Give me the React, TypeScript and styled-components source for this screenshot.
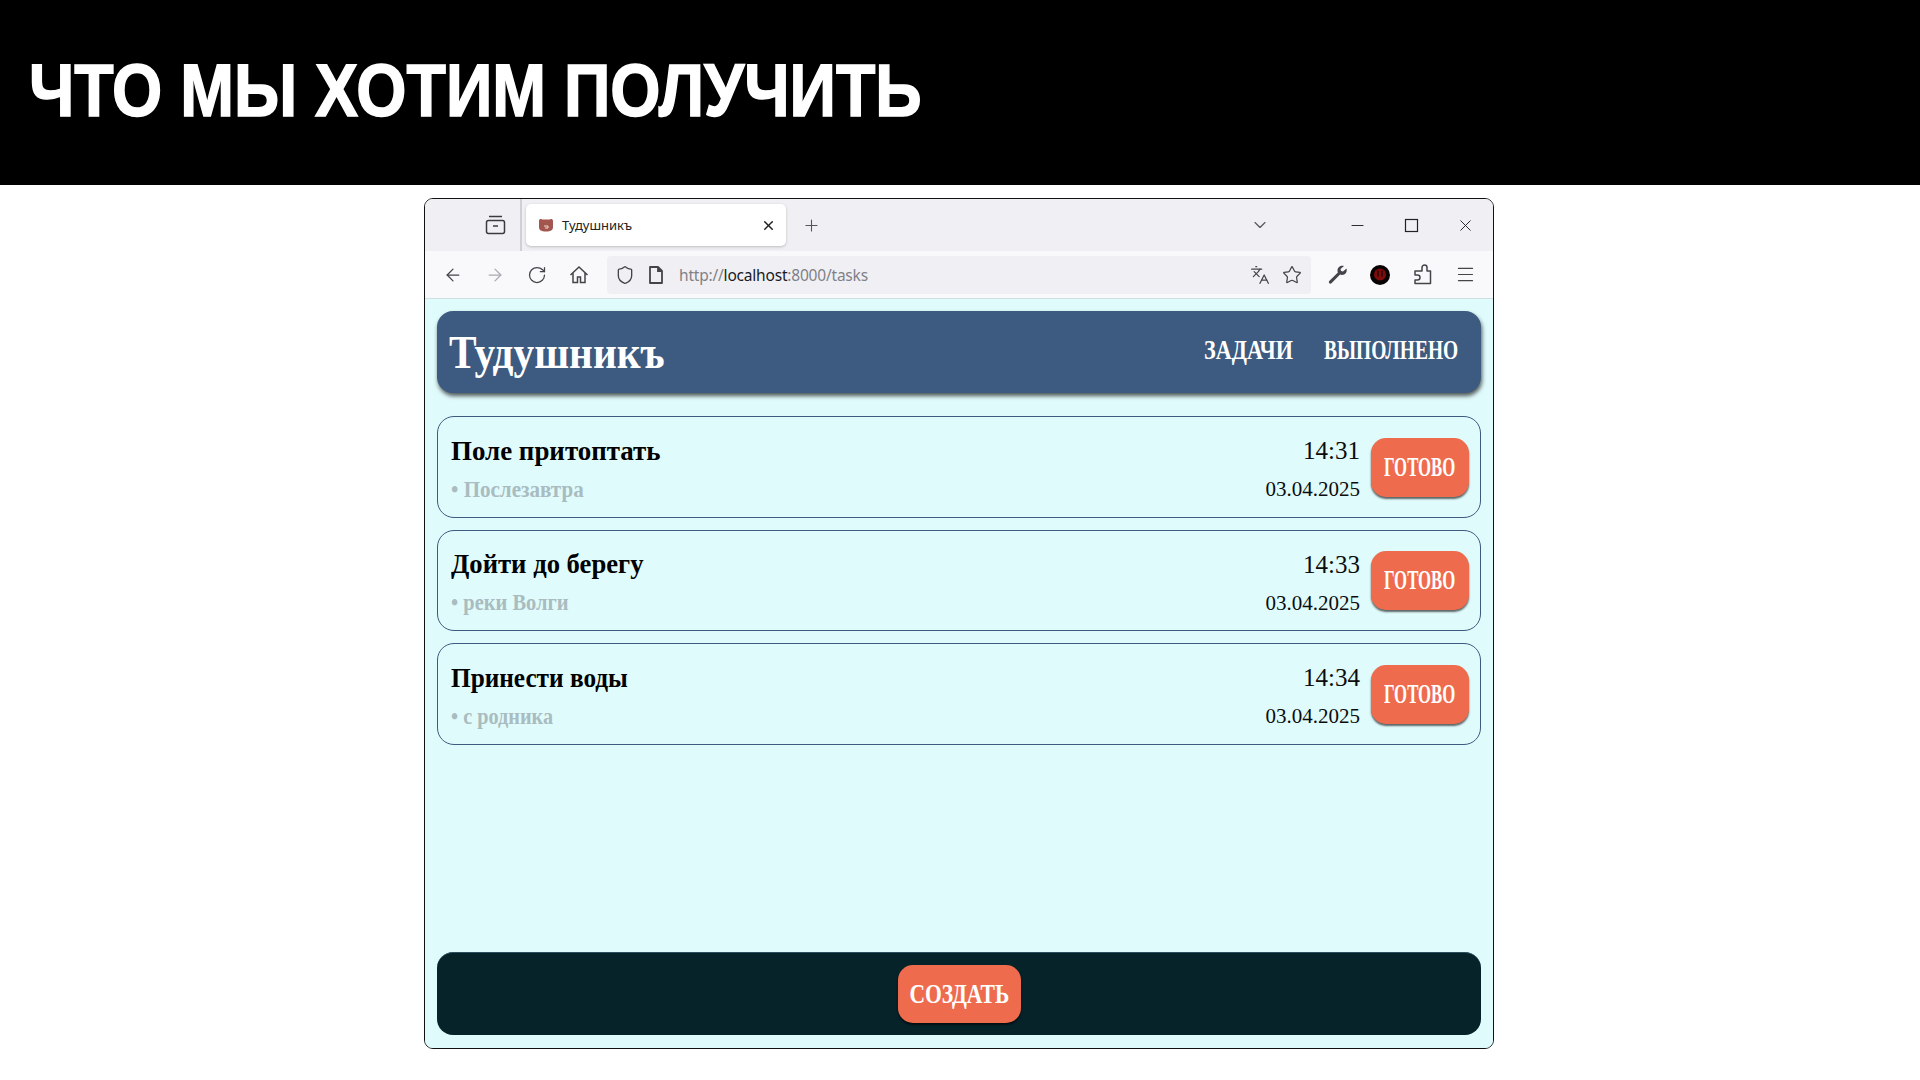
import styled, { createGlobalStyle } from 'styled-components';
import {
  ArrowLeft,
  ArrowRight,
  ChevronDown,
  Languages,
  Menu,
  Minus,
  Plus,
  RotateCw,
  Shield,
  Star,
  X,
} from 'lucide-react';

const GlobalStyle = createGlobalStyle`
  html, body {
    margin: 0;
    padding: 0;
    background: #fff;
    overflow: hidden;
  }
  * { box-sizing: border-box; }
`;

const Page = styled.div`
  width: 1920px;
  height: 1080px;
  display: flex;
  flex-direction: column;
`;

const TitleBar = styled.header`
  height: 185px;
  flex: none;
  background: #000;
  padding: 42px 0 0 29px;
`;

const SlideTitle = styled.h1`
  margin: 0;
  display: inline-block;
  font-family: 'Liberation Sans', Arial, sans-serif;
  font-weight: 700;
  font-size: 75px;
  line-height: 96px;
  color: #fff;
  white-space: nowrap;
  -webkit-text-stroke: 1.5px #fff;
  transform: scaleX(0.86);
  transform-origin: left center;
`;

const Stage = styled.main`
  flex: 1;
  display: flex;
  justify-content: center;
  padding: 13px 2px 0 0;
`;

const BrowserWindow = styled.section`
  width: 1070px;
  height: 851px;
  border: 1.5px solid #111;
  border-radius: 9px;
  overflow: hidden;
  display: flex;
  flex-direction: column;
  background: #e0fbfc;
`;

const TabStrip = styled.div`
  height: 52px;
  flex: none;
  background: #f0f0f4;
  display: flex;
  align-items: center;
  color: #3a3a40;
`;

const TabGroupSlot = styled.div`
  width: 97px;
  height: 100%;
  flex: none;
  border-right: 2px solid #cfcfd6;
  display: flex;
  align-items: center;
  justify-content: flex-end;
  padding-right: 14px;
`;

const Tab = styled.div`
  width: 260px;
  height: 42px;
  margin-left: 4px;
  border-radius: 5px;
  background: #fff;
  box-shadow: 0 1px 3px rgba(0, 0, 0, 0.22);
  display: flex;
  align-items: center;
  padding: 0 10px 0 12px;
  font-family: 'Noto Sans', 'Liberation Sans', sans-serif;
  font-size: 13px;
  color: #222;
`;

const TabTitle = styled.span`
  flex: 1;
  margin-left: 8px;
`;

const NewTab = styled.div`
  margin-left: 16px;
  display: flex;
  color: #55555c;
`;

const TabListSlot = styled.div`
  margin-left: 429px;
  display: flex;
  color: #55555c;
`;

const WindowControls = styled.div`
  margin-left: 78px;
  display: flex;
  gap: 35px;
  color: #222;
`;

const Toolbar = styled.div`
  height: 48px;
  flex: none;
  background: #f9f9fb;
  border-bottom: 1px solid #cfe0e4;
  display: flex;
  align-items: center;
  padding-left: 18px;
  color: #44444a;
`;

const NavIcons = styled.div`
  display: flex;
  align-items: center;
  gap: 22px;
`;

const FadedIcon = styled.span`
  display: flex;
  color: #a9a9b0;
`;

const UrlBar = styled.div`
  width: 704px;
  height: 38px;
  margin-left: 18px;
  border-radius: 4px;
  background: #f0f0f4;
  display: flex;
  align-items: center;
  padding: 0 9px 0 8px;
  gap: 12px;
`;

const UrlText = styled.div`
  flex: 1;
  margin: 1px 0 0 2px;
  font-family: 'Noto Sans', 'Liberation Sans', sans-serif;
  font-size: 15.5px;
  letter-spacing: -0.2px;
  color: #808087;

  b {
    font-weight: 400;
    color: #1a1a1e;
  }
`;

const ToolIcons = styled.div`
  margin-left: 17px;
  display: flex;
  align-items: center;
  gap: 22px;
`;

const Content = styled.div`
  flex: 1;
  min-height: 0;
  display: flex;
  flex-direction: column;
  padding: 12px 12px 13px 12px;
  background: #e0fbfc;
`;

const AppHeader = styled.header`
  height: 82px;
  flex: none;
  background: #3d5a80;
  border-radius: 16px;
  box-shadow: 1px 3px 4px rgba(0, 0, 0, 0.65);
  display: flex;
  align-items: center;
  justify-content: space-between;
  padding: 0 23px 0 12px;
  color: #fff;
`;

const Squeezed = styled.span<{ $x: number }>`
  display: inline-block;
  white-space: nowrap;
  transform: scaleX(${({ $x }) => $x});
  transform-origin: left center;
`;

const Logo = styled.div`
  width: 214px;
  font-family: 'Liberation Serif', 'DejaVu Serif', serif;
  font-weight: 700;
  font-size: 47px;
  line-height: 56px;
`;

const NavLinks = styled.nav`
  display: flex;
  gap: 30px;
  margin-top: -4px;
`;

const NavLink = styled.a<{ $active?: boolean; $w: number }>`
  width: ${({ $w }) => $w}px;
  font-family: 'Liberation Serif', 'DejaVu Serif', serif;
  font-weight: 700;
  font-size: 27px;
  line-height: 32px;
  color: #fff;
  white-space: nowrap;
  text-decoration: ${({ $active }) => ($active ? 'underline' : 'none')};
  text-decoration-thickness: 2px;
  text-underline-offset: 2px;
`;

const TaskList = styled.ul`
  list-style: none;
  margin: 23px 0 0;
  padding: 0;
  display: flex;
  flex-direction: column;
  gap: 12px;
  flex: 1;
`;

const TaskCard = styled.li`
  height: 101.5px;
  border: 1.5px solid #3d5a80;
  border-radius: 17px;
  display: flex;
  align-items: center;
  padding: 1px 11px 0 13px;
`;

const TaskText = styled.div`
  flex: 1;
  display: flex;
  flex-direction: column;
  gap: 8px;
  padding-top: 3px;
`;

const TaskName = styled.div`
  font-family: 'Liberation Serif', 'DejaVu Serif', serif;
  font-weight: 700;
  font-size: 28px;
  line-height: 34px;
  color: #000;
`;

const TaskNote = styled.div`
  font-family: 'Liberation Serif', 'DejaVu Serif', serif;
  font-weight: 700;
  font-size: 23px;
  line-height: 28px;
  color: #a9bcbf;
`;

const TaskWhen = styled.div`
  display: flex;
  flex-direction: column;
  align-items: flex-end;
  gap: 12px;
  margin-right: 11px;
  padding-top: 4px;
  font-family: 'Liberation Serif', 'DejaVu Serif', serif;
  color: #0c0c0c;
`;

const TaskTime = styled.div`
  font-size: 25px;
  line-height: 28px;
`;

const TaskDate = styled.div`
  font-size: 21px;
  line-height: 24px;
`;

const ActionButton = styled.button<{ $w: number; $h: number }>`
  width: ${({ $w }) => $w}px;
  height: ${({ $h }) => $h}px;
  flex: none;
  border: none;
  padding: 0;
  border-radius: 15px;
  background: #ee6c4d;
  box-shadow: 0 2px 2px rgba(0, 0, 0, 0.6);
  color: #fff;
  font-family: 'Liberation Serif', 'DejaVu Serif', serif;
  font-weight: 700;
  font-size: 27px;
  line-height: 1;
  display: flex;
  align-items: center;
  justify-content: center;
`;

const ButtonLabel = styled.span<{ $x: number }>`
  display: inline-block;
  white-space: nowrap;
  transform: scaleX(${({ $x }) => $x});
`;

const BottomBar = styled.footer`
  height: 83px;
  flex: none;
  border-radius: 16px;
  background: #06232a;
  border-top: 1px solid #2b5060;
  display: flex;
  align-items: center;
  justify-content: center;
`;

// nameX / noteX squeeze the fallback serif to the width of the original lettering
const tasks = [
  { name: 'Поле притоптать', nameX: 0.962, note: '• Послезавтра', noteX: 0.915, time: '14:31' },
  { name: 'Дойти до берегу', nameX: 0.952, note: '• реки Волги', noteX: 0.89, time: '14:33' },
  { name: 'Принести воды', nameX: 0.903, note: '• с родника', noteX: 0.88, time: '14:34' },
];

const ArchiveTab = () => (
  <svg width="21" height="20" viewBox="0 0 21 20" fill="none" stroke="currentColor" strokeWidth="1.5">
    <rect x="1.5" y="5.5" width="18" height="13" rx="2" />
    <path d="M4 1.500h13M8 11h5" />
  </svg>
);

const Favicon = () => (
  <svg width="16" height="14" viewBox="0 0 16 14">
    <path d="M1 3c0-2 2-2.500 3-1.500h8C13 .5 15 1 15 3v6c0 3-2 4.500-7 4.500S1 12 1 9z" fill="#a3564e" />
    <path d="M6 8h4v2H7" fill="none" stroke="#f3d9cf" strokeWidth="1" />
  </svg>
);

const SquareWindow = () => (
  <svg width="19" height="19" viewBox="0 0 19 19" fill="none" stroke="currentColor" strokeWidth="1.2">
    <rect x="3.500" y="3.500" width="12" height="12" />
  </svg>
);

const HomeIcon = () => (
  <svg width="20" height="20" viewBox="0 0 20 20" fill="none" stroke="currentColor" strokeWidth="1.5">
    <path d="M1.500 10 10 2l8.500 8M4 8v9.500h4.500V12h3v5.500H16V8" />
  </svg>
);

const PageIcon = () => (
  <svg width="18" height="20" viewBox="0 0 18 20" fill="none" stroke="currentColor" strokeWidth="1.8">
    <path d="M3 2h8l4 4v12H3z" strokeLinejoin="round" />
    <path d="M11 2v4h4" fill="currentColor" />
  </svg>
);

const WrenchIcon = () => (
  <svg width="20" height="20" viewBox="0 0 20 20" fill="currentColor">
    <path d="M18.500 3.500 15 6.500l-2-.5-.5-2L16 1c-3-1-6.500 1-6.500 4.500 0 .8.100 1.300.4 1.900L1.500 15.800c-.8.800-.8 1.700-.2 2.400.7.700 1.600.6 2.400-.2l8.400-8.400c.6.300 1.200.4 1.900.4 3.500 0 5.500-3.500 4.500-6.500z" />
  </svg>
);

const ExtensionBadge = () => (
  <svg width="20" height="20" viewBox="0 0 20 20">
    <circle cx="10" cy="10" r="10" fill="#090404" />
    <circle cx="10" cy="9.500" r="6" fill="#7d0c0c" />
    <path d="M8 5.500v6M12 5.500v6" stroke="#2c0505" strokeWidth="1.500" />
  </svg>
);

const PuzzleIcon = () => (
  <svg width="21" height="21" viewBox="0 0 21 21" fill="none" stroke="currentColor" strokeWidth="1.5" strokeLinejoin="round">
    <path d="M3 7h7V3.500a2.500 2.500 0 0 1 5 0V7h3.500v12.500H3V16h2.500a2 2 0 0 0 0-5H3z" />
  </svg>
);

export default function App() {
  return (
    <Page>
      <GlobalStyle />
      <TitleBar>
        <SlideTitle>ЧТО МЫ ХОТИМ ПОЛУЧИТЬ</SlideTitle>
      </TitleBar>
      <Stage>
        <BrowserWindow>
          <TabStrip>
            <TabGroupSlot>
              <ArchiveTab />
            </TabGroupSlot>
            <Tab>
              <Favicon />
              <TabTitle>Тудушникъ</TabTitle>
              <X size={15} strokeWidth={2.4} color="#222" />
            </Tab>
            <NewTab>
              <Plus size={19} strokeWidth={1.4} />
            </NewTab>
            <TabListSlot>
              <ChevronDown size={20} strokeWidth={1.4} />
            </TabListSlot>
            <WindowControls>
              <Minus size={19} strokeWidth={1.2} />
              <SquareWindow />
              <X size={19} strokeWidth={1.2} />
            </WindowControls>
          </TabStrip>
          <Toolbar>
            <NavIcons>
              <ArrowLeft size={20} strokeWidth={1.5} />
              <FadedIcon>
                <ArrowRight size={20} strokeWidth={1.5} />
              </FadedIcon>
              <RotateCw size={20} strokeWidth={1.5} />
              <HomeIcon />
            </NavIcons>
            <UrlBar>
              <Shield size={20} strokeWidth={1.6} />
              <PageIcon />
              <UrlText>
                http://<b>localhost</b>:8000/tasks
              </UrlText>
              <Languages size={20} strokeWidth={1.5} />
              <Star size={20} strokeWidth={1.5} />
            </UrlBar>
            <ToolIcons>
              <WrenchIcon />
              <ExtensionBadge />
              <PuzzleIcon />
              <Menu size={21} strokeWidth={1.4} />
            </ToolIcons>
          </Toolbar>
          <Content>
            <AppHeader>
              <Logo>
                <Squeezed $x={0.88}>Тудушникъ</Squeezed>
              </Logo>
              <NavLinks>
                <NavLink $active $w={90}>
                  <Squeezed $x={0.82}>ЗАДАЧИ</Squeezed>
                </NavLink>
                <NavLink $w={134}>
                  <Squeezed $x={0.72}>ВЫПОЛНЕНО</Squeezed>
                </NavLink>
              </NavLinks>
            </AppHeader>
            <TaskList>
              {tasks.map((task) => (
                <TaskCard key={task.time}>
                  <TaskText>
                    <TaskName>
                      <Squeezed $x={task.nameX}>{task.name}</Squeezed>
                    </TaskName>
                    <TaskNote>
                      <Squeezed $x={task.noteX}>{task.note}</Squeezed>
                    </TaskNote>
                  </TaskText>
                  <TaskWhen>
                    <TaskTime>{task.time}</TaskTime>
                    <TaskDate>03.04.2025</TaskDate>
                  </TaskWhen>
                  <ActionButton $w={98} $h={59}>
                    <ButtonLabel $x={0.62}>ГОТОВО</ButtonLabel>
                  </ActionButton>
                </TaskCard>
              ))}
            </TaskList>
            <BottomBar>
              <ActionButton $w={123} $h={58}>
                <ButtonLabel $x={0.8}>СОЗДАТЬ</ButtonLabel>
              </ActionButton>
            </BottomBar>
          </Content>
        </BrowserWindow>
      </Stage>
    </Page>
  );
}
